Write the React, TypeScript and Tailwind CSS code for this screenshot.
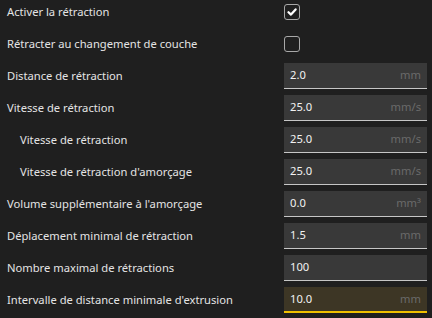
import { useState } from "react";

type Row = {
  label: string;
  indent?: boolean;
  kind: "check" | "input";
  checked?: boolean;
  value?: string;
  unit?: string;
  active?: boolean;
};

const rows: Row[] = [
  { label: "Activer la rétraction", kind: "check", checked: true },
  { label: "Rétracter au changement de couche", kind: "check", checked: false },
  { label: "Distance de rétraction", kind: "input", value: "2.0", unit: "mm" },
  { label: "Vitesse de rétraction", kind: "input", value: "25.0", unit: "mm/s" },
  { label: "Vitesse de rétraction", indent: true, kind: "input", value: "25.0", unit: "mm/s" },
  { label: "Vitesse de rétraction d'amorçage", indent: true, kind: "input", value: "25.0", unit: "mm/s" },
  { label: "Volume supplémentaire à l'amorçage", kind: "input", value: "0.0", unit: "mm³" },
  { label: "Déplacement minimal de rétraction", kind: "input", value: "1.5", unit: "mm" },
  { label: "Nombre maximal de rétractions", kind: "input", value: "100" },
  { label: "Intervalle de distance minimale d'extrusion", kind: "input", value: "10.0", unit: "mm", active: true },
];

function CheckBox({ checked }: { checked: boolean }) {
  const [on, setOn] = useState(checked);
  return (
    <div
      className="w-4 h-4 rounded-[3px] border border-[#a8a8a8] flex items-center justify-center"
      onClick={() => setOn(!on)}
    >
      {on && (
        <svg width="10" height="10" viewBox="0 0 10 10">
          <path d="M1.5 5.2 L4 7.6 L8.6 2.4" fill="none" stroke="#ffffff" strokeWidth="2.2" strokeLinecap="round" strokeLinejoin="round" />
        </svg>
      )}
    </div>
  );
}

function Field({ row }: { row: Row }) {
  return (
    <div
      className={
        row.active
          ? "w-[143px] h-[26px] flex items-center justify-between px-[6px] bg-[#3d3625] border-b-2 border-[#f0c000]"
          : "w-[143px] h-[26px] flex items-center justify-between px-[6px] bg-[#393939] border-b border-[#c6c6c6]"
      }
    >
      <span className="text-[#f2f2f2]">{row.value}</span>
      <span className="text-[#6a6a6a]">{row.unit}</span>
    </div>
  );
}

export default function App() {
  return (
    <div className="w-[432px] h-[318px] bg-[#1f1f1f] overflow-hidden text-[11.2px] font-['Noto_Sans',sans-serif]">
      <div className="flex flex-col gap-[6px] mt-[-1px]">
        {rows.map((row, i) => (
          <div key={i} className="h-[26px] flex items-center">
            <div className={row.indent ? "w-[284px] pl-[20px] text-[#e4e4e4]" : "w-[284px] pl-[7px] text-[#e4e4e4]"}>
              {row.label}
            </div>
            {row.kind === "check" ? <CheckBox checked={!!row.checked} /> : <Field row={row} />}
          </div>
        ))}
      </div>
    </div>
  );
}
